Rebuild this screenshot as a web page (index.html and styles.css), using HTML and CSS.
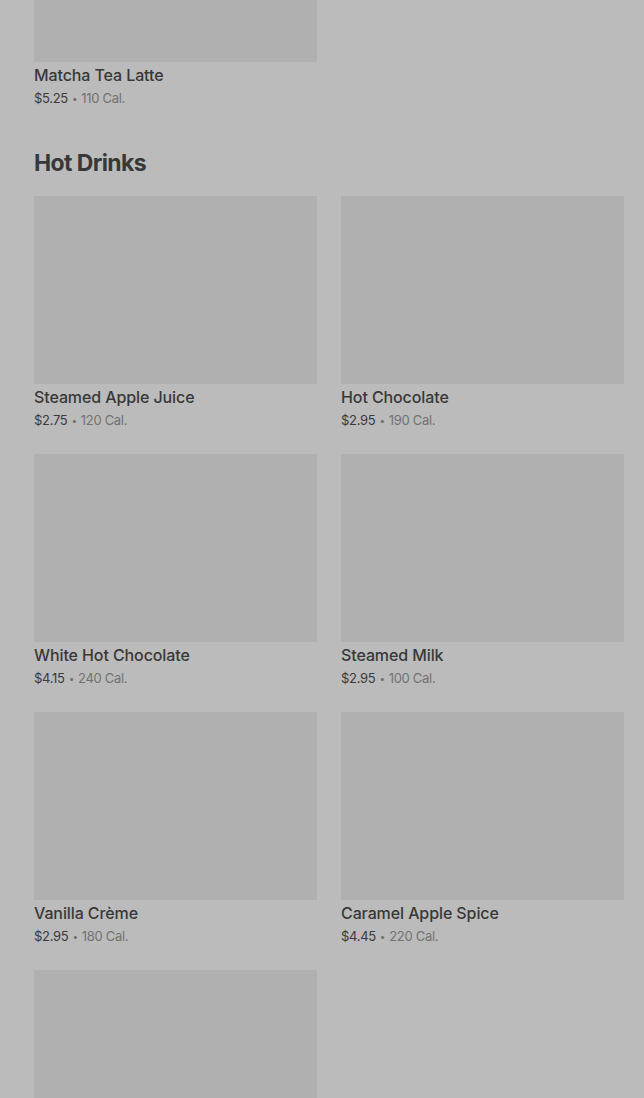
FILE: index.html
```html
<!DOCTYPE html>
<html lang="en">
<head>
    <meta charset="UTF-8">
    <meta name="viewport" content="width=device-width, initial-scale=1.0">
    <title>Menu</title>
    <link rel="stylesheet" href="styles.css">
</head>
<body>
    <div class="menu">
        <section class="category category-first">
            <div class="item-grid">
                <div class="item">
                    <div class="item-image"></div>
                    <div class="item-name">Matcha Tea Latte</div>
                    <div class="item-meta"><span class="price">$5.25</span><span class="dot">•</span>110 Cal.</div>
                </div>
            </div>
        </section>

        <section class="category">
            <h2>Hot Drinks</h2>
            <div class="item-grid">
                <div class="item">
                    <div class="item-image"></div>
                    <div class="item-name">Steamed Apple Juice</div>
                    <div class="item-meta"><span class="price">$2.75</span><span class="dot">•</span>120 Cal.</div>
                </div>
                <div class="item">
                    <div class="item-image"></div>
                    <div class="item-name">Hot Chocolate</div>
                    <div class="item-meta"><span class="price">$2.95</span><span class="dot">•</span>190 Cal.</div>
                </div>
                <div class="item">
                    <div class="item-image"></div>
                    <div class="item-name">White Hot Chocolate</div>
                    <div class="item-meta"><span class="price">$4.15</span><span class="dot">•</span>240 Cal.</div>
                </div>
                <div class="item">
                    <div class="item-image"></div>
                    <div class="item-name">Steamed Milk</div>
                    <div class="item-meta"><span class="price">$2.95</span><span class="dot">•</span>100 Cal.</div>
                </div>
                <div class="item">
                    <div class="item-image"></div>
                    <div class="item-name">Vanilla Crème</div>
                    <div class="item-meta"><span class="price">$2.95</span><span class="dot">•</span>180 Cal.</div>
                </div>
                <div class="item">
                    <div class="item-image"></div>
                    <div class="item-name">Caramel Apple Spice</div>
                    <div class="item-meta"><span class="price">$4.45</span><span class="dot">•</span>220 Cal.</div>
                </div>
                <div class="item">
                    <div class="item-image"></div>
                </div>
            </div>
        </section>
    </div>
</body>
</html>
```

FILE: styles.css
```css
* {
    box-sizing: border-box;
    margin: 0;
    padding: 0;
}

html, body {
    height: 100%;
    overflow: hidden;
}

body {
    background-color: #bbbbbb;
    font-family: Inter, "Noto Sans", sans-serif;
    color: #333333;
}

.menu {
    padding: 0 20px 0 34px;
}

.category-first {
    margin-top: -126px;
}

.category h2 {
    font-size: 23px;
    font-weight: 700;
    line-height: 32px;
    letter-spacing: -0.6px;
    color: #383838;
    margin-top: 38px;
    margin-bottom: 17px;
}

.item-grid {
    display: grid;
    grid-template-columns: 283px 283px;
    column-gap: 24px;
    row-gap: 23px;
}

.item-image {
    height: 188px;
    background-color: #b0b0b0;
}

.item-name {
    font-size: 16px;
    font-weight: 500;
    line-height: 24px;
    letter-spacing: -0.1px;
    padding-top: 1px;
    color: #383838;
}

.item-meta {
    display: flex;
    align-items: center;
    height: 22px;
    font-size: 13px;
    letter-spacing: -0.3px;
    color: #727272;
}

.item-meta .price {
    color: #3a3a3a;
}

.item-meta .dot {
    font-size: 10px;
    margin: 0 4px;
}
```
